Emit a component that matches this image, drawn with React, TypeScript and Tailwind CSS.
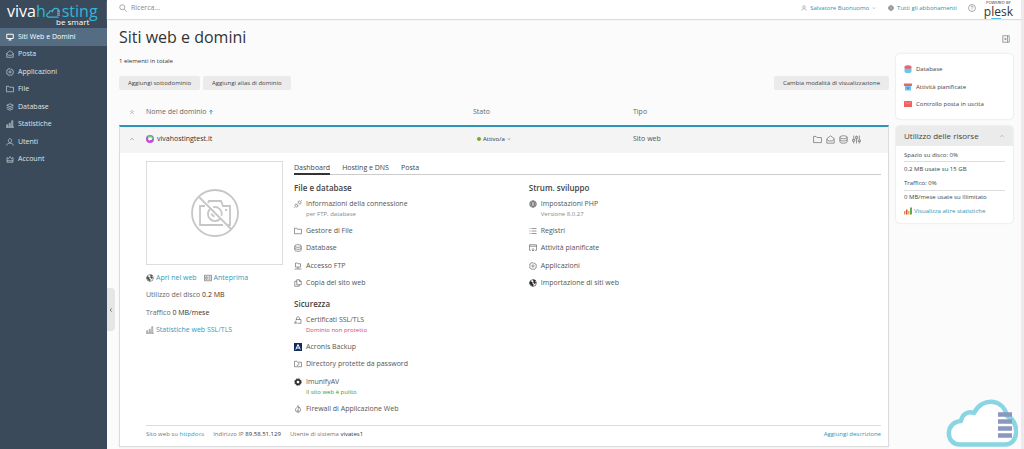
import type { ReactNode } from "react";
import clsx from "clsx";

const icons: Record<string, ReactNode> = {
    monitor: <path d="M1.5 2.5h13v8.500h-13zM8 11v3M5 14h6" strokeWidth="2" />,
    mail: <path d="M1.500 6.500 8 1.500l6.500 5v8h-13zM1.500 7.500 5 10.500h6l3.500-3" />,
    gear: (
        <>
            <path d="M8 1l1.500 1.700 2.300-.4.700 2.200 2.200.9-.4 2.300L15 8l-1 1.500.4 2.300-2.200.8-.9 2.200-2.100-.5L8 15l-1.500-1-2.200.4-.8-2.200-2.200-.8.500-2.200L1 8l1-1.500-.5-2.200 2.200-.8.8-2.100 2.100.4z" />
            <circle cx="8" cy="8" r="2.200" />
        </>
    ),
    folder: <path d="M1 13.500v-11h4.500l1.500 2h8v9z" />,
    layers: <path d="M8 1.500 14.500 4.500 8 7.500 1.500 4.500zM1.500 8 8 11l6.500-3M1.500 11.500 8 14.500l6.500-3" />,
    chart: <path d="M1.500 14.500v-5h2v5M6.500 14.500v-8h2v8M11.500 14.500v-13h2v13M0 14.500h16" />,
    user: <path d="M8 1.500c-4.500 0-4.500 7.500 0 7.500s4.500-7.500 0-7.500zM1.500 15c0-3 2-4 4.500-4.500h4c2.500.5 4.500 1.500 4.500 4.500" />,
    crown: <path d="M2 14.500V5l3 2.500L8 3l3 4.500L14 5v9.500zM2 11.500h12" />,
    search: <path d="M6.500 1.500a5 5 0 1 0 0 10 5 5 0 0 0 0-10zM10.200 10.200l5 5" />,
    globe: (
        <>
            <circle cx="8" cy="8" r="6.500" />
            <path d="M1.500 6h13M1.500 10h13M8 1.500c-4 4-4 9 0 13 4-4 4-9 0-13" />
        </>
    ),
    earth: (
        <>
            <circle cx="8" cy="8" r="6.700" />
            <path d="M2.500 5l4 1.500L6 8.500 8.500 11l-1 3.500L5 12 1.500 9zM9 1.500l3.500 1.500-1 2.500 2 2-2 2-2-1.500L9.500 5z" fill="currentColor" />
        </>
    ),
    help: (
        <>
            <circle cx="8" cy="8" r="7" />
            <path d="M5.800 6.200c0-3 4.400-3 4.400 0 0 1.500-2.200 1.500-2.200 3.300M8 11v1.300" />
        </>
    ),
    collapse: <path d="M1.500 1.500h13v13h-13zM11 1.500v13M3.500 8h5M6 5.500 8.500 8 6 10.500" />,
    database: <path d="M1.500 4v8c0 3.500 13 3.500 13 0V4c0-3.500-13-3.500-13 0 0 3.500 13 3.500 13 0M1.500 8c0 3.500 13 3.500 13 0" />,
    sliders: <path d="M3 1v7M3 11v4M1 8h4v3H1zM8 1v2M8 6v9M6 3h4v3H6zM13 1v8M13 12v3M11 9h4v3h-4z" />,
    plug: <path d="M9 2.500c2-2 6.500 2 4.500 4.500L12 8.500 7.500 4zM4 7.500 2.500 9c-2 2 2 6.500 4.500 4.500L8.500 12zM13.500 2.500l2-2M2.500 13.500l-2 2M5.500 9l1.500-1.500M7.500 11 9 9.500" />,
    ftp: <path d="M3 10V2h4l1 1.500h5V10zM8 10v4M1 14h14" />,
    copy: <path d="M5.500 11.500v-10h5.500l3.500 3.500v6.500zM11 1.500V5h3.500M5.500 4.500h-4v10h9v-3" />,
    lock: <path d="M5 7V4.500C5 .5 11 .5 11 4.500V7M4 9V7h10v7.500H7M1 12.500l2-2 2 2-2 2zM1 15l2-1 2 1" />,
    lockedFolder: <path d="M1 13.500v-11h4.500l1.500 2h8v9zM6 11.500l4-4M9 6.500l2 2M6.500 10l1.500 1.500" />,
    fire: <path d="M8 1c0 3-5 5-5 9 0 6 10 6 10 0 0-3-2-4-2-6-1 1-1.500 2-1.500 3C9 5 9 3 8 1zM8 9c-2 2-2 4 0 4s2-2 0-4" />,
    list: <path d="M1 3h2M5 3h10M1 8h2M5 8h10M1 13h2M5 13h10" />,
    calendar: <path d="M4 12.500H1v-11h14v11h-3M1 4.500h14M8 8v6M5.500 11.500 8 14l2.500-2.500" />,
    preview: <path d="M1 2.500h14v11H1zM3.500 5.500h3v5h-3zM9 5.500h4M9 8h4M9 10.500h4" />,
    up: <path d="M3.500 10.500 8 6l4.500 4.500" />,
    doubleUp: <path d="M3.500 8 8 3.500 12.500 8M3.500 13 8 8.500l4.500 4.500" />,
    down: <path d="M3.500 6 8 10.500 12.500 6" strokeWidth="2" />,
    arrowUp: <path d="M8 14V3M4 7l4-4 4 4" stroke="#2a9dc0" strokeWidth="2.500" />,
};

interface IconProps {
    name: string;
    className?: string;
}

const Icon = ({ name, className = "size-2" }: IconProps) => (
    <svg viewBox="0 0 16 16" fill="none" stroke="currentColor" strokeWidth="1.2" aria-hidden="true" className={clsx("shrink-0", className)}>
        {icons[name]}
    </svg>
);

const ImunifyIcon = () => (
    <svg viewBox="0 0 16 16" fill="none" stroke="#2d3136" className="size-2 shrink-0" aria-hidden="true">
        <circle cx="8" cy="8" r="4.500" strokeWidth="3.500" />
        <circle cx="8" cy="8" r="6.500" strokeWidth="2" strokeDasharray="3 2.100" />
    </svg>
);

const AcronisIcon = () => (
    <svg viewBox="0 0 16 16" className="size-2 shrink-0" aria-hidden="true">
        <path d="M0 0h16v16H0z" fill="#0f2c5c" />
        <path d="M3.500 13 8 3l4.500 10M5 10h6" fill="none" stroke="#fff" strokeWidth="2" />
    </svg>
);

const menu = [
    { label: "Siti Web e Domini", icon: "monitor" },
    { label: "Posta", icon: "mail" },
    { label: "Applicazioni", icon: "gear" },
    { label: "File", icon: "folder" },
    { label: "Database", icon: "layers" },
    { label: "Statistiche", icon: "chart" },
    { label: "Utenti", icon: "user" },
    { label: "Account", icon: "crown" },
];

const Sidebar = () => (
    <aside className="w-[107px] shrink-0 bg-[#3a4a5b] text-white">
        <a href="#" aria-label="vivahosting be smart" className="flex h-7 flex-col pl-[7px]">
            <span className="flex text-[16px] leading-[22px]">
                <span>viva</span>
                <span className="text-[#33b5d8]">h</span>
                <svg viewBox="0 0 32 24" fill="none" className="mt-[6px] h-3 w-4 shrink-0" aria-hidden="true">
                    <path d="M25 22H6c-6 0-6-8 0-8 0-5 5-5 7-3 1-9 13-8 13 0" stroke="#33b5d8" strokeWidth="2.500" />
                    <path d="M22 10h6M22 14h6M22 18h6" stroke="#8f9dc0" strokeWidth="2.500" />
                </svg>
                <span className="text-[#33b5d8]">sting</span>
            </span>
            <span className="-mt-1 pl-[49px] text-[8px] leading-[8px]">be smart</span>
        </a>
        <nav className="flex h-35 flex-col">
            {menu.map((item, i) => (
                <a
                    key={item.label}
                    href="#"
                    className={clsx("flex flex-1 items-center gap-1 pl-1.5 font-medium", i === 0 ? "bg-[#546d82]" : "text-[#dfe4e8]")}
                >
                    <Icon name={item.icon} />
                    {item.label}
                </a>
            ))}
        </nav>
    </aside>
);

const Topbar = () => (
    <header className="flex h-[19px] items-center bg-white pr-2 pl-3 shadow-[0_1px_1px_#dcdcdc]">
        <label className="flex flex-1 items-center gap-1 pb-1 text-[#777]">
            <Icon name="search" />
            <input type="text" aria-label="Ricerca" placeholder="Ricerca..." className="h-3 w-full placeholder:text-[#888] focus:outline-none" />
        </label>
        <div className="flex items-center pb-1 text-[6px] font-medium text-[#2a93b5]">
            <button className="flex items-center gap-[3px]">
                <Icon name="user" className="size-1.5 text-[#777]" />
                Salvatore Buonuomo
                <Icon name="down" className="size-1 text-[#777]" />
            </button>
            <a href="#" className="ml-3 flex items-center gap-[3px]">
                <Icon name="globe" className="size-1.5 text-[#444]" />
                Tutti gli abbonamenti
            </a>
            <button aria-label="Aiuto" className="ml-[11px] text-[#777]">
                <Icon name="help" />
            </button>
        </div>
        <a href="#" className="ml-2 flex flex-col items-center text-[#333]">
            <span className="text-[4px] leading-[4px]">POWERED BY</span>
            <span className="text-[12px] leading-[14px]">
                p<span className="underline decoration-[#53bce6] underline-offset-2">le</span>sk
            </span>
        </a>
    </header>
);

const grayButton = "h-[14px] rounded-xs bg-[#ebebeb] px-[9px] text-[6px] font-medium text-[#444]";

interface Entry {
    label: string;
    icon: ReactNode;
    note?: string;
    noteClass?: string;
}

const fileItems: Entry[] = [
    { label: "Gestore di File", icon: <Icon name="folder" /> },
    { label: "Database", icon: <Icon name="database" /> },
    { label: "Accesso FTP", icon: <Icon name="ftp" /> },
    { label: "Copia del sito web", icon: <Icon name="copy" /> },
];

const devItems: Entry[] = [
    { label: "Registri", icon: <Icon name="list" /> },
    { label: "Attività pianificate", icon: <Icon name="calendar" /> },
    { label: "Applicazioni", icon: <Icon name="gear" /> },
    { label: "Importazione di siti web", icon: <Icon name="earth" className="size-2 text-[#222]" /> },
];

const Row = ({ label, icon, note, noteClass = "text-[#888]" }: Entry) => (
    <li className={note ? "h-[27px]" : "flex flex-1 flex-col"}>
        <a href="#" className="flex h-[17px] items-center gap-1 text-[#555]">
            {icon}
            {label}
        </a>
        {note && <p className={clsx("-mt-[3px] pl-3 text-[6px] leading-[10px]", noteClass)}>{note}</p>}
    </li>
);

const Heading = ({ children }: { children: ReactNode }) => (
    <h2 className="flex h-[14px] items-center text-[8px] font-semibold text-[#444]">{children}</h2>
);

const Preview = () => (
    <div className="w-[137px] shrink-0">
        <div className="flex h-[104px] items-center justify-center border border-[#ddd]">
            <svg viewBox="0 0 48 48" fill="none" stroke="#c6c6c6" strokeWidth="1.800" className="size-12" aria-hidden="true">
                <circle cx="24" cy="24" r="23" />
                <path d="M8 8l32 32" />
                <path d="M14 17H9v19h23M37 36h2V17h-7l-2-5H18l-1 2M34 21h2" />
                <path d="M19 20a7 7 0 0 0 10 10M22 18.200a7 7 0 0 1 8.500 8.500M20.500 24.500a4 4 0 0 0 3 3" />
            </svg>
        </div>
        <div className="mt-1 flex flex-col text-[#666]">
            <div className="flex h-[17px] items-center gap-[7px] text-[#2a9dc0]">
                <a href="#" className="flex items-center gap-0.5">
                    <Icon name="earth" className="size-2 text-[#555]" />
                    Apri nel web
                </a>
                <a href="#" className="flex items-center gap-0.5">
                    <Icon name="preview" className="size-2 text-[#555]" />
                    Anteprima
                </a>
            </div>
            <p className="leading-[18px]">
                Utilizzo del disco <span className="text-[#333]">0.2 MB</span>
            </p>
            <p className="leading-[17px]">
                Traffico <span className="text-[#333]">0 MB/mese</span>
            </p>
            <a href="#" className="flex h-[18px] items-center gap-0.5 text-[#2a9dc0]">
                <Icon name="chart" className="size-2 text-[#777]" />
                Statistiche web SSL/TLS
            </a>
        </div>
    </div>
);

const DomainDetail = () => (
    <div className="border-x border-b border-[#dcdcdc] bg-white pr-[7px] pl-[26px] shadow-xs">
        <div className="flex gap-[11px] pt-2">
            <Preview />
            <div className="flex-1">
                <div role="tablist" className="flex h-[14px] gap-3 border-b border-[#ccc] text-[#444]">
                    <button role="tab" aria-selected="true" className="h-[14px] border-b-2 border-[#333] pt-px font-medium">
                        Dashboard
                    </button>
                    <button role="tab" aria-selected="false" className="h-[14px] border-b-2 border-transparent pt-px">
                        Hosting e DNS
                    </button>
                    <button role="tab" aria-selected="false" className="h-[14px] border-b-2 border-transparent pt-px">
                        Posta
                    </button>
                </div>
                <div className="grid grid-cols-[2fr_3fr] pt-[6px]">
                    <div>
                        <Heading>File e database</Heading>
                        <ul>
                            <Row label="Informazioni della connessione" icon={<Icon name="plug" />} note="per FTP, database" />
                        </ul>
                        <ul className="flex h-[70px] flex-col">
                            {fileItems.map((e) => (
                                <Row key={e.label} {...e} />
                            ))}
                        </ul>
                        <div className="pt-[5px]">
                            <Heading>Sicurezza</Heading>
                        </div>
                        <ul>
                            <Row label="Certificati SSL/TLS" icon={<Icon name="lock" />} note="Dominio non protetto" noteClass="text-[#d2476b]" />
                        </ul>
                        <ul className="flex h-[35px] flex-col">
                            <Row label="Acronis Backup" icon={<AcronisIcon />} />
                            <Row label="Directory protette da password" icon={<Icon name="lockedFolder" />} />
                        </ul>
                        <ul>
                            <Row label="ImunifyAV" icon={<ImunifyIcon />} note="Il sito web è pulito" noteClass="text-[#2f9e37]" />
                            <Row label="Firewall di Applicazione Web" icon={<Icon name="fire" />} />
                        </ul>
                    </div>
                    <div>
                        <Heading>Strum. sviluppo</Heading>
                        <ul>
                            <Row label="Impostazioni PHP" icon={<Icon name="globe" className="size-2 text-[#333]" />} note="Versione 8.0.27" />
                        </ul>
                        <ul className="flex h-[70px] flex-col">
                            {devItems.map((e) => (
                                <Row key={e.label} {...e} />
                            ))}
                        </ul>
                    </div>
                </div>
            </div>
        </div>
        <div className="mt-2 flex h-[21px] items-center gap-[9px] border-t border-[#ddd] pb-1 text-[6px] text-[#777]">
            <span>
                Sito web su{" "}
                <a href="#" className="font-medium text-[#2a9dc0]">
                    httpdocs
                </a>
            </span>
            <span>
                Indirizzo IP <span className="text-[#333]">89.58.51.129</span>
            </span>
            <span>
                Utente di sistema <span className="text-[#333]">vivates1</span>
            </span>
            <a href="#" className="ml-auto text-[#2a93b5]">
                Aggiungi descrizione
            </a>
        </div>
    </div>
);

const DomainTable = () => (
    <table className="mt-2 w-full table-fixed border-separate border-spacing-0 text-left">
        <thead>
            <tr className="h-[27px] text-[#666]">
                <th className="w-[27px] pl-[10px]">
                    <Icon name="doubleUp" className="size-1.5" />
                </th>
                <th className="w-[327px] font-normal">
                    <span className="flex items-center gap-px">
                        Nome del dominio
                        <Icon name="arrowUp" className="size-1.5" />
                    </span>
                </th>
                <th className="w-40 font-normal">Stato</th>
                <th className="font-normal">Tipo</th>
            </tr>
        </thead>
        <tbody>
            <tr className="h-7 bg-[#f4f4f4] text-[#555]">
                <td className="border-t-2 border-l border-t-[#2e95b8] border-l-[#dcdcdc] pb-0.5 pl-[9px]">
                    <button aria-label="Comprimi" className="block">
                        <Icon name="up" className="size-1.5" />
                    </button>
                </td>
                <td className="border-t-2 border-[#2e95b8] pb-0.5">
                    <a href="#" className="flex items-center gap-[3px] font-medium text-[#333]">
                        <svg viewBox="0 0 16 16" className="size-2" aria-hidden="true">
                            <circle cx="8" cy="8" r="8" fill="#c04fd8" />
                            <path d="M2.500 2.500a8 8 0 0 1 13 6L8 8z" fill="#5fd07a" />
                            <path d="M4.500 5h7v5H8l-2 2v-2H4.500z" fill="#fff" />
                        </svg>
                        vivahostingtest.it
                    </a>
                </td>
                <td className="border-t-2 border-[#2e95b8] pb-0.5">
                    <button className="ml-1 flex items-center gap-0.5 text-[6px] font-medium text-[#333]">
                        <span className="size-1 rounded-full bg-[#78a832]" />
                        Attivo/a
                        <Icon name="down" className="size-1" />
                    </button>
                </td>
                <td className="border-t-2 border-r border-t-[#2e95b8] border-r-[#dcdcdc] pr-[27px] pb-0.5">
                    <div className="flex items-center justify-between">
                        Sito web
                        <span className="flex gap-1 text-[#666]">
                            <Icon name="folder" className="size-[9px]" />
                            <Icon name="mail" className="size-[9px]" />
                            <Icon name="database" className="size-[9px]" />
                            <Icon name="sliders" className="size-[9px]" />
                        </span>
                    </div>
                </td>
            </tr>
            <tr>
                <td colSpan={4} className="p-0">
                    <DomainDetail />
                </td>
            </tr>
        </tbody>
    </table>
);

const Widgets = () => (
    <aside className="w-[117px] shrink-0 text-[6px] text-[#444]">
        <div className="flex h-[26px] justify-end pt-2 pr-[3px]">
            <button aria-label="Nascondi pannello" className="size-2 text-[#666]">
                <Icon name="collapse" />
            </button>
        </div>
        <ul className="mt-px flex h-[65px] flex-col rounded-sm bg-white px-2 py-1.5 shadow-[0_0_2px_#d0d0d0]">
            <li className="flex flex-1 items-center">
                <a href="#" className="flex items-center gap-1">
                    <svg viewBox="0 0 16 16" className="size-2" aria-hidden="true">
                        <path d="M1 4v9c0 4 14 4 14 0V4z" fill="#6fc3ec" />
                        <ellipse cx="8" cy="4" rx="7" ry="3.500" fill="#ee6360" />
                    </svg>
                    Database
                </a>
            </li>
            <li className="flex flex-1 items-center">
                <a href="#" className="flex items-center gap-1">
                    <svg viewBox="0 0 16 16" className="size-2" aria-hidden="true">
                        <path d="M2 5h12v10H2z" fill="#6fc3ec" />
                        <path d="M0 1h16v5H0z" fill="#ee6360" />
                        <path d="M5 9h6l-3 4z" fill="#3b88b5" />
                    </svg>
                    Attività pianificate
                </a>
            </li>
            <li className="flex flex-1 items-center">
                <a href="#" className="flex items-center gap-1">
                    <svg viewBox="0 0 16 16" className="size-2" aria-hidden="true">
                        <path d="M0 2h16v12H0z" fill="#ee6360" />
                        <path d="M1 3l7 5 7-5" fill="none" stroke="#f79a96" strokeWidth="1.500" />
                    </svg>
                    Controllo posta in uscita
                </a>
            </li>
        </ul>
        <section className="mt-[7px] rounded-sm bg-white pb-1 shadow-[0_0_2px_#d0d0d0]">
            <h2 className="flex h-5 items-center justify-between rounded-t-sm bg-[#ebebeb] px-2 text-[8px] font-medium">
                Utilizzo delle risorse
                <Icon name="up" className="size-1.5 text-[#888]" />
            </h2>
            <div className="px-2 pt-[3px]">
                <p className="border-b border-[#ddd] leading-[12px]">
                    Spazio su disco: <span className="font-medium">0%</span>
                </p>
                <p className="leading-[14px]">0.2 MB usate su 15 GB</p>
                <p className="border-b border-[#ddd] leading-[14px]">
                    Traffico: <span className="font-medium">0%</span>
                </p>
                <p className="leading-[12px]">0 MB/mese usate su Illimitato</p>
                <a href="#" className="flex h-4 items-center gap-0.5 text-[#2a93b5]">
                    <svg viewBox="0 0 16 16" className="size-2" aria-hidden="true">
                        <path d="M0 8h3v7H0z" fill="#e8963a" />
                        <path d="M4 5h3v10H4z" fill="#d9534f" />
                        <path d="M8 8h3v7H8z" fill="#e8b53a" />
                        <path d="M12 1h4v14h-4z" fill="#6aa84f" />
                    </svg>
                    Visualizza altre statistiche
                </a>
            </div>
        </section>
    </aside>
);

const CloudBadge = () => (
    <svg viewBox="0 0 72 48" className="fixed right-[6px] bottom-[2px] w-[72px]" fill="none" aria-hidden="true">
        <path
            d="M14 45.500C-1 45.500-1 23 15 22c1-7 7-10 13-8C36-2 57-1 61 17c12 4 13 28.500-2 28.500z"
            fill="#fff"
            stroke="#8ad5e4"
            strokeWidth="4.500"
            strokeLinejoin="round"
        />
        <path d="M52 15.500h14M52 22.500h14M52 29.500h14M52 36.500h14" stroke="#8b97bf" strokeWidth="4.500" />
    </svg>
);

export default function App() {
    return (
        <div className="flex min-h-screen bg-[#fbfbfb] font-['Open_Sans',sans-serif] text-[7px] leading-[10px] text-[#444]">
            <Sidebar />
            <div className="relative min-w-0 flex-1 border-r-3 border-[#f0e8ef]">
                <button
                    aria-label="Comprimi menu"
                    className="absolute top-72 left-0 flex h-[43px] w-2 items-center justify-center rounded-r-sm bg-[#e6e6e6] text-[#555]"
                >
                    <Icon name="down" className="size-1.5 rotate-90" />
                </button>
                <Topbar />
                <div className="flex gap-[7px] pt-2 pr-2 pl-3">
                    <main className="min-w-0 flex-1">
                        <h1 className="text-[16px] leading-5 text-[#333]">Siti web e domini</h1>
                        <p className="mt-[9px] text-[6px] text-[#333]">1 elementi in totale</p>
                        <div className="mt-[10px] flex gap-[3px]">
                            <button className={grayButton}>Aggiungi sottodominio</button>
                            <button className={grayButton}>Aggiungi alias di dominio</button>
                            <button className={clsx(grayButton, "ml-auto")}>Cambia modalità di visualizzazione</button>
                        </div>
                        <DomainTable />
                    </main>
                    <Widgets />
                </div>
            </div>
            <CloudBadge />
        </div>
    );
}
